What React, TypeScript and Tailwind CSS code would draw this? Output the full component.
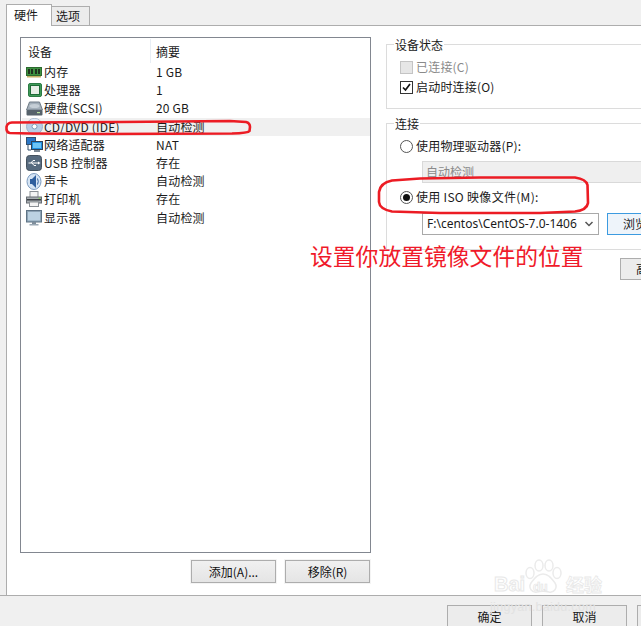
import React from "react";

const font = { fontFamily: '"Noto Sans CJK SC","Liberation Sans",sans-serif' };

const Memory = () => (
  <svg width="16" height="11" viewBox="0 0 16 11"><rect x="0.500" y="0.500" width="15" height="8" fill="#3d9140" stroke="#2b6a2e" /><path d="M2 2h2v5H2zM5 2h2v5H5zM9 2h2v5H9zM12 2h2v5h-2z" fill="#20331f" /><path d="M1 9h14v1.500H1z" fill="#c2b063" /></svg>
);
const Cpu = () => (
  <svg width="14" height="14" viewBox="0 0 14 14" className="ml-[2px]"><rect x="0.500" y="0.500" width="13" height="13" rx="1.500" fill="#3f9a58" stroke="#2b7a44" /><rect x="2.500" y="2.500" width="9" height="9" fill="#e6eee6" stroke="#1f6a38" /></svg>
);
const Disk = () => (
  <svg width="17" height="15" viewBox="0 0 17 15"><path d="M3.500 1h10l3 8H.5z" fill="#a3afba" stroke="#6e7b86" /><ellipse cx="8.500" cy="5" rx="5" ry="2" fill="#c5ced6" /><rect x="0.500" y="9" width="16" height="5.500" rx="1" fill="#56626b" /><rect x="11" y="11" width="3" height="1.200" fill="#b8e0a0" /></svg>
);
const Cd = () => (
  <svg width="17" height="17" viewBox="0 0 17 17"><circle cx="8.500" cy="8.500" r="8" fill="#b7cde6" stroke="#9fb2c8" /><path d="M8.500 8.500 3 3a8 8 0 0 1 11 0z" fill="#dfe9f5" /><circle cx="8.500" cy="8.500" r="2.500" fill="#fff" stroke="#7f9ab8" /></svg>
);
const Net = () => (
  <svg width="17" height="16" viewBox="0 0 17 16"><rect x="0.500" y="0.500" width="9" height="7" fill="#2a76c6" stroke="#33506e" /><path d="M2 8v5h3" fill="none" stroke="#33506e" /><rect x="5.500" y="4.500" width="11" height="8" fill="#1f8fe0" stroke="#2e4258" /><rect x="7" y="6" width="8" height="5" fill="#6cc4f5" /><rect x="8" y="13" width="6" height="2" fill="#7c8894" /></svg>
);
const Usb = () => (
  <svg width="16" height="16" viewBox="0 0 16 16"><rect x="0.500" y="0.500" width="15" height="15" rx="3" fill="#566a7e" stroke="#44515e" /><path d="M2.500 8h10M5 8l2-2.500h2M6 8l2 2.500h2" fill="none" stroke="#fff" /><path d="m12 6.500 2.500 1.500-2.500 1.500z" fill="#fff" /></svg>
);
const Sound = () => (
  <svg width="16" height="17" viewBox="0 0 16 17"><ellipse cx="8" cy="8.500" rx="7" ry="8" fill="#d5e4f4" stroke="#7d9cc0" /><path d="M4 6h2l4-4v13l-4-4H4z" fill="#2e5e9e" /><path d="M11.500 5.500q1.500 3 0 6" fill="none" stroke="#2e5e9e" /></svg>
);
const Printer = () => (
  <svg width="16" height="16" viewBox="0 0 16 16"><rect x="4" y="0.500" width="8" height="6" fill="#f4f4f4" stroke="#8a8f94" /><rect x="0.500" y="6" width="15" height="6" fill="#a9aeb3" stroke="#666c72" /><rect x="1" y="8" width="14" height="1.500" fill="#3b3f44" /><rect x="12.500" y="6.800" width="2" height="1" fill="#7fd04e" /><rect x="3.500" y="11" width="9" height="4.500" fill="#f4f4f4" stroke="#8a8f94" /></svg>
);
const Display = () => (
  <svg width="16" height="16" viewBox="0 0 16 16"><rect x="0.500" y="0.500" width="15" height="11.500" fill="#8da3b5" stroke="#5f7486" /><rect x="2" y="2" width="12" height="8.500" fill="#bcd2e2" /><rect x="6" y="12" width="4" height="2" fill="#7f8e9b" /><rect x="3.500" y="14" width="9" height="1.500" fill="#9aa8b4" /></svg>
);

const rows: [React.ReactNode, string, string, boolean?][] = [
  [<Memory />, "内存", "1 GB"],
  [<Cpu />, "处理器", "1"],
  [<Disk />, "硬盘(SCSI)", "20 GB"],
  [<Cd />, "CD/DVD (IDE)", "自动检测", true],
  [<Net />, "网络适配器", "NAT"],
  [<Usb />, "USB 控制器", "存在"],
  [<Sound />, "声卡", "自动检测"],
  [<Printer />, "打印机", "存在"],
  [<Display />, "显示器", "自动检测"],
];

function Btn({ children, className }: { children: React.ReactNode; className: string }) {
  return (
    <div className={`flex items-center justify-center border border-[#adadad] bg-gradient-to-b from-[#f0f0f0] to-[#e5e5e5] text-[12px] text-[#111] outline outline-1 outline-[#f4f4f4] ${className}`}>
      {children}
    </div>
  );
}

export default function App() {
  return (
    <div className="relative flex h-[626px] w-[641px] flex-col overflow-hidden bg-[#f0f0f0] text-[12px] text-[#1a1a1a]" style={font}>
      {/* tabs */}
      <div className="flex h-[25px] items-end pl-[6px]">
        <div className="z-10 mb-[-1px] flex h-[22px] w-[46px] items-center justify-center border border-b-0 border-[#adadad] bg-white pb-[2px] pr-[6px] leading-none">硬件</div>
        <div className="flex h-[19px] w-[38px] items-center justify-center border border-l-0 border-b-0 border-[#adadad] bg-[#ececec] pr-[5px] leading-none">选项</div>
      </div>
      {/* panel */}
      <div className="ml-[6px] flex h-[570px] gap-[15px] border-l border-t border-[#adadad] bg-white pl-[13px] pt-[11px]">
        <div className="flex w-[351px] shrink-0 flex-col">
          <div className="flex h-[516px] flex-col border border-[#828790] bg-white pl-[1px] pt-[1px]">
            <div className="flex h-[24px] shrink-0 items-start">
              <div className="h-full w-[129px] border-r border-[#e8eef5] pl-[6px] leading-[26px]">设备</div>
              <div className="pl-[5px] leading-[26px]">摘要</div>
            </div>
            {rows.map(([icon, name, sum, sel]) => (
              <div key={name} className={`flex h-[18.2px] shrink-0 items-center ${sel ? "bg-[#f0f0f0]" : ""}`}>
                <div className="flex w-[130px] items-center">
                  <span className="ml-[4px] flex w-[18px] shrink-0 items-center">{icon}</span>
                  <span className="whitespace-nowrap leading-none tracking-[0.2px]">{name}</span>
                </div>
                <span className="whitespace-nowrap pl-[4px] leading-none tracking-[0.2px]">{sum}</span>
              </div>
            ))}
          </div>
          <div className="mt-[7px] flex justify-end gap-[9px] pr-[1px]">
            <Btn className="h-[23px] w-[85px]">添加(A)...</Btn>
            <Btn className="h-[23px] w-[85px]">移除(R)</Btn>
          </div>
        </div>
        <div className="flex w-[300px] shrink-0 flex-col pt-[7px]">
          <fieldset className="relative h-[65px] w-[300px] border border-[#dcdcdc] pl-[13px]">
            <legend className="absolute left-[7px] top-[-8px] bg-white px-[1px] leading-[15px]">设备状态</legend>
            <div className="mt-[12px] flex h-[20px] items-center gap-[3px] text-[#8a8a8a]">
              <span className="h-[13px] w-[13px] border border-[#c4c4c4] bg-[#e6e6e6]" />
              <span className="tracking-[0.2px]">已连接(C)</span>
            </div>
            <div className="flex h-[20px] items-center gap-[3px]">
              <span className="flex h-[13px] w-[13px] items-center justify-center border border-[#333] bg-white">
                <svg width="11" height="11" viewBox="0 0 11 11"><path d="m2 5.500 2.500 2.500 4.500-6" fill="none" stroke="#111" strokeWidth="1.700" /></svg>
              </span>
              <span className="tracking-[0.2px]">启动时连接(O)</span>
            </div>
          </fieldset>
          <fieldset className="relative mt-[14px] h-[127px] w-[300px] border border-[#dcdcdc]">
            <legend className="absolute left-[7px] top-[-8px] bg-white px-[1px] leading-[15px]">连接</legend>
            <div className="ml-[13px] mt-[12px] flex h-[20px] items-center gap-[3px]">
              <span className="h-[13px] w-[13px] rounded-full border border-[#555] bg-white" />
              <span className="tracking-[0.2px]">使用物理驱动器(P):</span>
            </div>
            <div className="ml-[35px] mt-[5px] flex h-[22px] w-[264px] items-center border border-[#d9d9d9] bg-[#efefef] pl-[3px] text-[#8a8a8a]">自动检测</div>
            <div className="ml-[13px] mt-[4px] flex h-[20px] items-center gap-[3px]">
              <span className="flex h-[13px] w-[13px] items-center justify-center rounded-full border border-[#555] bg-white">
                <span className="h-[7px] w-[7px] rounded-full bg-[#111]" />
              </span>
              <span className="tracking-[0.3px]">使用 ISO 映像文件(M):</span>
            </div>
            <div className="ml-[35px] mt-[6px] flex items-center gap-[8px]">
              <div className="flex h-[22px] w-[177px] items-center justify-between border border-[#a9a9a9] bg-white pl-[4px] pr-[4px]">
                <span className="whitespace-nowrap" style={{ fontFamily: '"Noto Sans","Liberation Sans",sans-serif' }}>F:\centos\CentOS-7.0-1406</span>
                <svg width="10" height="8" viewBox="0 0 10 8" className="shrink-0"><path d="m1.500 2 3.500 3.500L8.500 2" fill="none" stroke="#555" strokeWidth="1.500" /></svg>
              </div>
              <div className="flex h-[22px] w-[60px] shrink-0 items-center border border-[#3c9be0] bg-[#eef4fa] pl-[15px] leading-none">
                <span className="whitespace-nowrap">浏览</span>
              </div>
            </div>
          </fieldset>
          <div className="ml-[234px] mt-[8px] flex h-[22px] w-[60px] shrink-0 items-center border border-[#adadad] bg-[#ececec] pl-[15px] leading-none">
            <span className="whitespace-nowrap">高级</span>
          </div>
        </div>
      </div>
      {/* footer */}
      <div className="flex h-[31px] items-start gap-[10px] border-t border-[#adadad] pl-[447px] pt-[9px]">
        <div className="flex h-[23px] w-[85px] shrink-0 items-center justify-center border border-b-0 border-[#adadad] bg-[#ececec] text-[12px]">确定</div>
        <div className="flex h-[23px] w-[85px] shrink-0 items-center justify-center border border-b-0 border-[#adadad] bg-[#ececec] text-[12px]">取消</div>
        <div className="h-[23px] w-[85px] shrink-0 border border-b-0 border-[#adadad] bg-[#ececec]" />
      </div>

      {/* red annotations */}
      <svg className="pointer-events-none absolute left-0 top-0" width="641" height="626" viewBox="0 0 641 626">
        <path d="M12 122.500 L120 122 L230 121 L246 122 Q250 123 250 127 L249.500 131 Q248 133 232 133.500 L100 134 L30 133.500 L10 133 Q6 132.500 6.500 127 Q7 123 12 122.500Z" fill="none" stroke="#ec1c24" strokeWidth="2.600" />
        <path d="M392 180.500 L420 178.500 L480 177.500 L575 177.500 Q586 179 587.500 185 L588 203 Q587 210 575 211.500 L540 213 L440 213 L392 211.500 Q379.500 209 379 202 L379 192 Q380 183 392 180.500Z" fill="none" stroke="#ec1c24" strokeWidth="2.600" />
      </svg>
      <div className="absolute left-[310px] top-[242px] whitespace-nowrap text-[22.800px] leading-[28px] text-[#f01a2a]">设置你放置镜像文件的位置</div>
      {/* watermark */}
      <div className="absolute left-[490px] top-[559px] h-[54px] w-[118px]">
        <svg className="absolute left-[32px] top-0" width="42" height="36" viewBox="0 0 42 36">
          <g fill="#ffffff" stroke="#ebebeb" strokeWidth="1.500">
            <ellipse cx="8" cy="14" rx="4" ry="5.500" />
            <ellipse cx="17" cy="6.500" rx="4" ry="5.500" />
            <ellipse cx="27" cy="6.500" rx="4" ry="5.500" />
            <ellipse cx="35" cy="14" rx="4" ry="5.500" />
            <path d="M21 15c6 0 9 5 12 9 3 5-1 10-6 9-4-1-8-1-12 0-5 1-9-4-6-9 3-4 6-9 12-9z" />
          </g>
        </svg>
        <div className="absolute left-[4px] top-[14px] text-[20px] font-bold leading-[22px] text-white" style={{ fontFamily: '"Liberation Sans",sans-serif', WebkitTextStroke: "1px #e8e8e8" }}>Bai</div>
        <div className="absolute left-[43px] top-[21px] text-[12px] font-bold leading-[14px] text-white" style={{ fontFamily: '"Liberation Sans",sans-serif', WebkitTextStroke: "0.700px #e4e4e4" }}>du</div>
        <div className="absolute left-[76px] top-[15px] text-[18px] font-bold leading-[20px] text-white" style={{ WebkitTextStroke: "0.800px #e8e8e8" }}>经验</div>
        <div className="absolute left-[0px] top-[41px] whitespace-nowrap text-[12.500px] leading-[14px] tracking-[0.3px] text-[#e2e2e2]" style={{ fontFamily: '"Liberation Sans",sans-serif' }}>jingyan.baidu.com</div>
      </div>
    </div>
  );
}
